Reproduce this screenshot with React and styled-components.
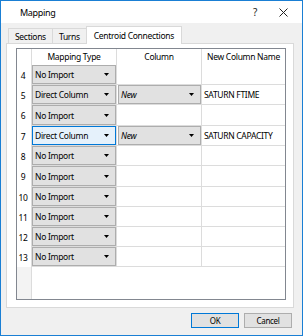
import React from 'react';
import styled, { createGlobalStyle, css } from 'styled-components';

const GlobalStyle = createGlobalStyle`
  html, body { margin: 0; padding: 0; background: #ffffff; }
  body {
    font-family: "Noto Sans", "Open Sans", sans-serif;
    font-size: 8.5px;
    letter-spacing: -0.3px;
    color: #000;
  }
  * { box-sizing: border-box; }
`;

// h: row heights of the scaled-down original (rows are ~20.2px apart)
const rows = [
  { n: 4, h: 20, type: 'No Import' },
  { n: 5, h: 20, type: 'Direct Column', column: 'New', name: 'SATURN FTIME' },
  { n: 6, h: 21, type: 'No Import' },
  { n: 7, h: 20, type: 'Direct Column', column: 'New', name: 'SATURN CAPACITY', hot: true },
  { n: 8, h: 20, type: 'No Import' },
  { n: 9, h: 21, type: 'No Import' },
  { n: 10, h: 20, type: 'No Import' },
  { n: 11, h: 20, type: 'No Import' },
  { n: 12, h: 20, type: 'No Import' },
  { n: 13, h: 20, type: 'No Import' },
];

const Window = styled.div`
  width: 303px;
  height: 336px;
  border: 1px solid #1a7fd4;
  background: #f0f0f0;
  display: flex;
  flex-direction: column;
`;

const TitleBar = styled.div`
  height: 22px;
  background: #ffffff;
  display: flex;
  align-items: center;
`;

const Title = styled.span`
  flex: 1;
  margin-left: 19px;
  font-size: 9px;
`;

const TitleButton = styled.span`
  width: 28px;
  display: flex;
  justify-content: center;
  align-items: center;
  font-size: 10px;
  color: #222;
  margin-right: ${(p) => p.$gap || 0}px;
`;

const TabStrip = styled.div`
  margin-top: 3px;
  height: 17px;
  display: flex;
  align-items: flex-end;
  padding-left: 7px;
  position: relative;
  z-index: 1;
`;

const Tab = styled.div`
  height: 15px;
  padding: 0 6px;
  display: flex;
  align-items: center;
  background: #f0f0f0;
  border: 1px solid #d9d9d9;
  border-bottom: none;
  margin-left: ${(p) => (p.$first ? 0 : -1)}px;
  ${(p) =>
    p.$active &&
    css`
      height: 18px;
      margin-bottom: -1px;
      background: #ffffff;
      padding: 0 7px 1px;
    `}
`;

const Panel = styled.div`
  margin-left: 5px;
  width: 288px;
  height: 265px;
  background: #ffffff;
  border: 1px solid #d9d9d9;
  padding: 4px 7px 7px 9px;
`;

const Grid = styled.div`
  width: 270px;
  height: 252px;
  border: 1px solid #828790;
  display: flex;
  flex-direction: column;
  background: #ffffff;
`;

const GridRow = styled.div`
  display: grid;
  grid-template-columns: 15px 85px 85px 83px;
  height: ${(p) => p.$h}px;
`;

const Filler = styled.div`
  flex: 1;
  display: grid;
  grid-template-columns: 15px 1fr;
`;

const HeaderCell = styled.div`
  display: flex;
  justify-content: center;
  align-items: center;
  padding-bottom: 1px;
  border-right: ${(p) => (p.$last ? 'none' : '1px solid #dcdcdc')};
`;

const RowHead = styled.div`
  display: flex;
  align-items: center;
  justify-content: center;
  padding-right: 2px;
  border-right: 1px solid #dcdcdc;
  background: ${(p) => (p.$empty ? '#f3f3f3' : '#ffffff')};
`;

const Cell = styled.div`
  border-right: ${(p) => (p.$last ? 'none' : '1px solid #dcdcdc')};
  border-bottom: 1px solid #dcdcdc;
  display: flex;
  align-items: center;
  padding: ${(p) => (p.$text ? '0 0 0 2px' : '0')};
  white-space: nowrap;
`;

const Combo = styled.div`
  width: 100%;
  height: 100%;
  display: flex;
  align-items: center;
  padding: 0 6px 0 2px;
  background: ${(p) => (p.$hot ? '#e5f1fb' : '#e1e1e1')};
  border: 1px solid ${(p) => (p.$hot ? '#0078d7' : '#adadad')};
  font-style: ${(p) => (p.$italic ? 'italic' : 'normal')};
  ${(p) =>
    p.$inset &&
    css`
      margin-left: 1px;
      width: calc(100% - 1px);
    `}
`;

const ComboText = styled.span`
  flex: 1;
`;

const Footer = styled.div`
  margin-top: 5px;
  display: flex;
  justify-content: flex-end;
  gap: 5px;
  padding-right: 10px;
`;

const Button = styled.div`
  width: 48px;
  height: 15px;
  display: flex;
  align-items: center;
  justify-content: center;
  background: #e1e1e1;
  border: 1px solid ${(p) => (p.$default ? '#0078d7' : '#adadad')};
  font-size: 8px;
`;

const Arrow = () => (
  <svg width="5" height="3" viewBox="0 0 5 3">
    <path d="M0 0 H5 L2.5 3 Z" fill="#000" />
  </svg>
);

const CloseIcon = () => (
  <svg width="9" height="9" viewBox="0 0 9 9">
    <path d="M0.5 0.5 L8.5 8.5 M8.5 0.5 L0.5 8.5" stroke="#222" strokeWidth="1" />
  </svg>
);

const App = () => (
  <>
    <GlobalStyle />
    <Window>
      <TitleBar>
        <Title>Mapping</Title>
        <TitleButton>?</TitleButton>
        <TitleButton $gap={5}>
          <CloseIcon />
        </TitleButton>
      </TitleBar>

      <TabStrip>
        <Tab $first>Sections</Tab>
        <Tab>Turns</Tab>
        <Tab $active>Centroid Connections</Tab>
      </TabStrip>

      <Panel>
        <Grid>
          <GridRow $h={16}>
            <HeaderCell />
            <HeaderCell>Mapping Type</HeaderCell>
            <HeaderCell>Column</HeaderCell>
            <HeaderCell $last>New Column Name</HeaderCell>
          </GridRow>
          {rows.map((r) => (
            <GridRow key={r.n} $h={r.h}>
              <RowHead>{r.n}</RowHead>
              <Cell>
                <Combo $hot={r.hot}>
                  <ComboText>{r.type}</ComboText>
                  <Arrow />
                </Combo>
              </Cell>
              <Cell>
                {r.column && (
                  <Combo $italic $inset>
                    <ComboText>{r.column}</ComboText>
                    <Arrow />
                  </Combo>
                )}
              </Cell>
              <Cell $last $text>
                {r.name}
              </Cell>
            </GridRow>
          ))}
          <Filler>
            <RowHead $empty />
            <div />
          </Filler>
        </Grid>
      </Panel>

      <Footer>
        <Button $default>OK</Button>
        <Button>Cancel</Button>
      </Footer>
    </Window>
  </>
);

export default App;
